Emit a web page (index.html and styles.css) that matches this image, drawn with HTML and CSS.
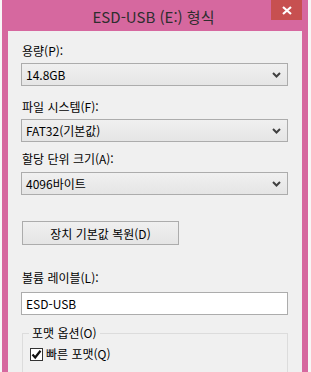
FILE: index.html
```html
<!DOCTYPE html>
<html lang="ko">
<head>
<meta charset="utf-8">
<link rel="stylesheet" href="styles.css">
</head>
<body>
<div class="window">
  <div class="titlebar">
    <span class="title">ESD-USB (E:) 형식</span>
    <div class="close">
      <svg width="10" height="9" viewBox="0 0 10 9"><path d="M1 1 L9 8 M9 1 L1 8" stroke="#fff" stroke-width="2.2"/></svg>
    </div>
  </div>
  <div class="client">
    <div class="label l1">용량(P):</div>
    <div class="combo">
      <span>14.8GB</span>
      <svg class="arrow" width="9" height="6" viewBox="0 0 9 6"><path d="M1 1 L4.5 4.5 L8 1" fill="none" stroke="#404040" stroke-width="2"/></svg>
    </div>
    <div class="label l2">파일 시스템(F):</div>
    <div class="combo">
      <span>FAT32(기본값)</span>
      <svg class="arrow" width="9" height="6" viewBox="0 0 9 6"><path d="M1 1 L4.5 4.5 L8 1" fill="none" stroke="#404040" stroke-width="2"/></svg>
    </div>
    <div class="label l3">할당 단위 크기(A):</div>
    <div class="combo">
      <span>4096바이트</span>
      <svg class="arrow" width="9" height="6" viewBox="0 0 9 6"><path d="M1 1 L4.5 4.5 L8 1" fill="none" stroke="#404040" stroke-width="2"/></svg>
    </div>
    <div class="button">장치 기본값 복원(D)</div>
    <div class="label l4">볼륨 레이블(L):</div>
    <div class="input">ESD-USB</div>
    <div class="group">
      <div class="legend">포맷 옵션(O)</div>
      <div class="check-row">
        <span class="checkbox">
          <svg width="11" height="11" viewBox="0 0 11 11"><path d="M1.5 5.5 L4.2 8.5 L9.5 1.8" fill="none" stroke="#111" stroke-width="2.2"/></svg>
        </span>
        <span>빠른 포맷(Q)</span>
      </div>
    </div>
  </div>
</div>
</body>
</html>
```
FILE: styles.css
```css
html, body {
  margin: 0;
  padding: 0;
}
body {
  background: #f7f7f7;
  width: 311px;
  height: 372px;
  overflow: hidden;
  font-family: "Noto Sans CJK KR", "Noto Sans", sans-serif;
  font-size: 12px;
  color: #000;
}
.window {
  margin-left: 2px;
  width: 306px;
  height: 372px;
  background: #d6689f;
  display: flex;
  flex-direction: column;
  overflow: hidden;
}
.titlebar {
  height: 31px;
  position: relative;
  display: flex;
  justify-content: center;
  align-items: center;
  flex-shrink: 0;
}
.title {
  font-size: 15px;
  color: #2e2e2e;
  margin-top: 1px;
  margin-left: -3px;
}
.close {
  position: absolute;
  right: 6px;
  top: 0;
  width: 31px;
  height: 20px;
  background: #c75050;
  display: flex;
  align-items: center;
  justify-content: center;
}
.client {
  margin: 0 6px;
  background: #f0f0f0;
  flex: 1;
  min-height: 0;
  padding: 12px 0 0 13px;
  display: flex;
  flex-direction: column;
  align-items: flex-start;
  overflow: hidden;
}
.label {
  height: 16px;
  line-height: 16px;
  padding-left: 1px;
  flex-shrink: 0;
}
.l1 { margin-top: 0; }
.l2 { margin-top: 13px; }
.l3 { margin-top: 9px; }
.l4 { margin-top: 25px; }
.combo {
  box-sizing: border-box;
  width: 267px;
  height: 23px;
  flex-shrink: 0;
  margin-top: 4px;
  border: 1px solid #acacac;
  background: linear-gradient(#f0f0f0, #e5e5e5);
  display: flex;
  align-items: center;
  justify-content: space-between;
  padding: 0 6px 0 4px;
}
.l3 + .combo { margin-top: 5px; }
.arrow { margin-top: 1px; }
.button {
  box-sizing: border-box;
  width: 157px;
  height: 24px;
  flex-shrink: 0;
  margin-top: 26px;
  margin-left: 1px;
  border: 1px solid #acacac;
  background: linear-gradient(#f0f0f0, #e5e5e5);
  display: flex;
  align-items: center;
  justify-content: center;
}
.input {
  box-sizing: border-box;
  width: 267px;
  height: 23px;
  flex-shrink: 0;
  margin-top: 6px;
  border: 1px solid #acacac;
  background: #fff;
  display: flex;
  align-items: center;
  padding-left: 4px;
}
.group {
  box-sizing: border-box;
  width: 266px;
  margin-left: 1px;
  margin-top: 18px;
  border: 1px solid #dcdcdc;
  height: 60px;
  flex-shrink: 0;
  position: relative;
  padding: 12px 0 0 7px;
}
.legend {
  position: absolute;
  top: -9px;
  left: 6px;
  padding: 0 3px;
  background: #f0f0f0;
  line-height: 16px;
}
.check-row {
  display: flex;
  align-items: center;
  gap: 3px;
  line-height: 16px;
}
.checkbox {
  box-sizing: border-box;
  width: 13px;
  height: 13px;
  border: 1px solid #333;
  background: #fff;
  display: flex;
  align-items: center;
  justify-content: center;
}
```
